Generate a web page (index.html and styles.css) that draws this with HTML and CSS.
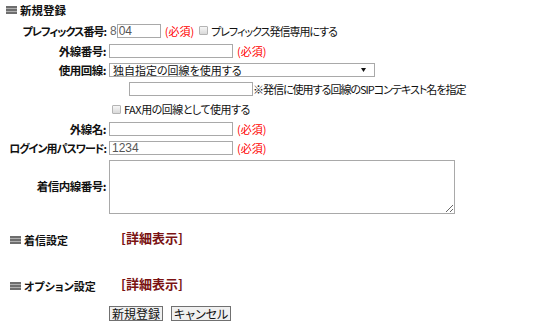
FILE: index.html
```html
<!DOCTYPE html>
<html lang="ja">
<head>
    <meta charset="UTF-8">
    <title>新規登録</title>
    <link rel="stylesheet" href="styles.css">
</head>
<body>

    <div class="page">
        <div class="heading">
            <svg class="bar-icon" width="11" height="8" viewBox="0 0 11 8"><rect y="0" width="11" height="2" fill="#6e6e6e"/><rect y="2" width="11" height="1" fill="#b0b0b0"/><rect y="3" width="11" height="2" fill="#6e6e6e"/><rect y="5" width="11" height="1" fill="#b0b0b0"/><rect y="6" width="11" height="2" fill="#6e6e6e"/></svg>
            新規登録
        </div>

        <div class="form">
            <div class="label kana">プレフィックス番号:</div>
            <div class="field">
                <span class="prefix">8</span><input class="text short" type="text" value="04"><span class="req">(必須)</span>
                <span class="check"></span><span class="tight">プレフィックス発信専用にする</span>
            </div>

            <div class="label">外線番号:</div>
            <div class="field"><input class="text" type="text"><span class="req">(必須)</span></div>

            <div class="label">使用回線:</div>
            <div class="field">
                <div class="select">
                    独自指定の回線を使用する
                    <svg class="arrow" width="5" height="4" viewBox="0 0 5 4"><path d="M0 0H5L2.5 4Z" fill="#111"/></svg>
                </div>
            </div>

            <div class="label"></div>
            <div class="field indent"><input class="text" type="text"><span class="note">※発信に使用する回線のSIPコンテキスト名を指定</span></div>

            <div class="label"></div>
            <div class="field"><span class="check fax"></span><span class="fax-text">FAX用の回線として使用する</span></div>

            <div class="label">外線名:</div>
            <div class="field"><input class="text" type="text"><span class="req">(必須)</span></div>

            <div class="label kana">ログイン用パスワード:</div>
            <div class="field"><input class="text" type="text" value="1234"><span class="req">(必須)</span></div>

            <div class="label">着信内線番号:</div>
            <div class="field"><textarea class="area"></textarea></div>
        </div>

        <div class="section first">
            <svg class="bar-icon" width="11" height="8" viewBox="0 0 11 8"><rect y="0" width="11" height="2" fill="#6e6e6e"/><rect y="2" width="11" height="1" fill="#b0b0b0"/><rect y="3" width="11" height="2" fill="#6e6e6e"/><rect y="5" width="11" height="1" fill="#b0b0b0"/><rect y="6" width="11" height="2" fill="#6e6e6e"/></svg>
            <span class="section-title">着信設定</span>
            <a class="detail" href="#">[詳細表示]</a>
        </div>

        <div class="section">
            <svg class="bar-icon" width="11" height="8" viewBox="0 0 11 8"><rect y="0" width="11" height="2" fill="#6e6e6e"/><rect y="2" width="11" height="1" fill="#b0b0b0"/><rect y="3" width="11" height="2" fill="#6e6e6e"/><rect y="5" width="11" height="1" fill="#b0b0b0"/><rect y="6" width="11" height="2" fill="#6e6e6e"/></svg>
            <span class="section-title">オプション設定</span>
            <a class="detail" href="#">[詳細表示]</a>
        </div>

        <div class="actions">
            <button class="btn">新規登録</button>
            <button class="btn">キャンセル</button>
        </div>
    </div>

</body>
</html>
```

FILE: styles.css
```css
body {
    margin: 0;
    background-color: #fff;
    color: #111;
    font-family: "Noto Sans CJK JP", "Liberation Sans", sans-serif;
    font-size: 12px;
    line-height: 14px;
    font-feature-settings: "palt";
}

.heading {
    display: flex;
    align-items: center;
    height: 20px;
    padding-left: 6px;
    font-weight: bold;
    font-size: 11.5px;
}

.bar-icon {
    flex: none;
    margin-right: 3px;
}

.form {
    display: grid;
    grid-template-columns: 100px 1fr;
    grid-template-rows: 21px 20px 18px 20px 20px 19px 20px auto;
    column-gap: 3px;
    padding-left: 6px;
}

.label {
    display: flex;
    align-items: center;
    justify-content: flex-end;
    font-weight: bold;
    font-size: 11.5px;
    letter-spacing: -0.5px;
    white-space: nowrap;
}

.label.kana {
    font-size: 11px;
    letter-spacing: -1px;
}

.field {
    display: flex;
    align-items: center;
    white-space: nowrap;
    font-size: 11px;
}

.field.indent {
    padding-left: 20px;
}

.prefix {
    color: #666;
    font-family: "Liberation Sans", sans-serif;
    font-size: 12px;
    margin-left: 1px;
}

.text {
    box-sizing: border-box;
    width: 124px;
    height: 14px;
    margin: 0;
    padding: 0 2px;
    border: 1px solid #a9a9a9;
    border-radius: 0;
    color: #555;
    font-family: "Liberation Sans", sans-serif;
    font-size: 12px;
    outline: none;
}

.text.short {
    width: 44px;
    padding-left: 1px;
}

.req {
    color: #f00;
    margin-left: 4px;
}

.tight {
    letter-spacing: -1px;
}

.note {
    letter-spacing: -1px;
}

.fax-text {
    letter-spacing: -0.5px;
}

.check {
    display: inline-block;
    box-sizing: border-box;
    width: 9px;
    height: 9px;
    margin: 0 3px 0 5px;
    border: 1px solid #b4b4b4;
    border-radius: 1px;
    background: linear-gradient(#f6f6f6, #d9d9d9);
}

.check.fax {
    margin-left: 3px;
}

.select {
    position: relative;
    box-sizing: border-box;
    width: 266px;
    height: 14px;
    padding-left: 3px;
    border: 1px solid #a9a9a9;
    line-height: 12px;
    font-size: 11px;
}

.select .arrow {
    position: absolute;
    right: 8px;
    top: 4px;
}

.area {
    box-sizing: border-box;
    width: 346px;
    height: 54px;
    margin: 2px 0 0;
    border: 1px solid #a9a9a9;
    border-radius: 0;
    outline: none;
    display: block;
}

.section {
    display: flex;
    align-items: center;
    height: 20px;
    margin-top: 26px;
    padding-left: 10px;
}

.section.first {
    margin-top: 16px;
}

.section-title {
    width: 97px;
    font-weight: bold;
    font-size: 11px;
}

.detail {
    color: #7a1212;
    font-weight: bold;
    font-size: 13px;
    text-decoration: none;
    margin-top: -5px;
}

.actions {
    display: flex;
    gap: 8px;
    margin-top: 10px;
    padding-left: 109px;
}

.btn {
    box-sizing: border-box;
    height: 15px;
    margin: 0;
    padding: 0 2px;
    border: 1px solid #707070;
    border-radius: 0;
    background-color: #f0f0f0;
    color: #111;
    font-family: inherit;
    font-size: 12px;
    line-height: 12px;
    font-feature-settings: "palt";
}
```
